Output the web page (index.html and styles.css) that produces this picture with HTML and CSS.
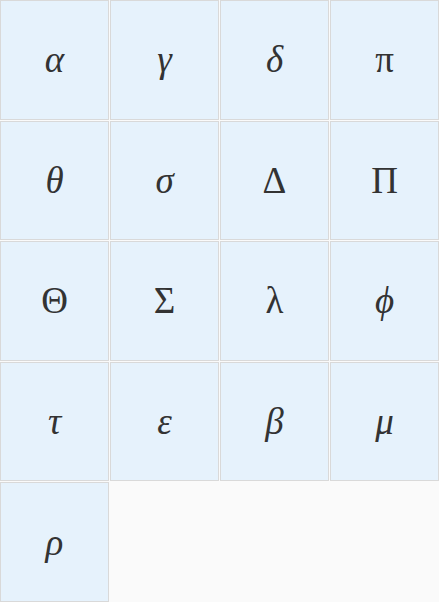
FILE: index.html
```html
<!DOCTYPE html>
<html lang="en">
<head>
<meta charset="utf-8">
<title>Greek letters</title>
<link rel="stylesheet" href="styles.css">
</head>
<body>
<div class="grid">
  <div class="cell it">α</div>
  <div class="cell it">γ</div>
  <div class="cell it">δ</div>
  <div class="cell">π</div>
  <div class="cell it">θ</div>
  <div class="cell it">σ</div>
  <div class="cell">Δ</div>
  <div class="cell">Π</div>
  <div class="cell">Θ</div>
  <div class="cell">Σ</div>
  <div class="cell">λ</div>
  <div class="cell it">ϕ</div>
  <div class="cell it">τ</div>
  <div class="cell it">ε</div>
  <div class="cell it">β</div>
  <div class="cell it">μ</div>
  <div class="cell it">ρ</div>
</div>
</body>
</html>
```
FILE: styles.css
```css
html, body {
  margin: 0;
  padding: 0;
  background: #fafafa;
}
.grid {
  display: grid;
  grid-template-columns: repeat(4, 1fr);
  grid-template-rows: repeat(5, 1fr);
  gap: 1px;
  height: 100vh;
  box-sizing: border-box;
}
.cell {
  display: flex;
  align-items: center;
  justify-content: center;
  background: #e6f2fc;
  border: 1.5px solid #d9d9d9;
  color: #333;
  font-family: "Liberation Serif", "DejaVu Serif", serif;
  font-size: 37px;
}
.it {
  font-style: italic;
}
```
